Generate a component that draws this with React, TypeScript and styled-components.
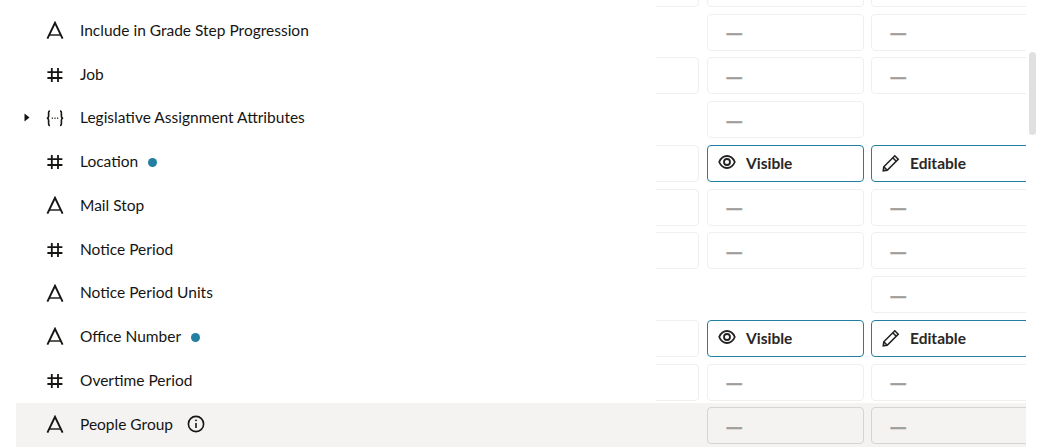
import React from "react";
import styled, { createGlobalStyle } from "styled-components";

const Global = createGlobalStyle`
  html, body { margin: 0; padding: 0; background: #fff; height: 100%; overflow: hidden; }
  body { font-family: "Lato", "Noto Sans", sans-serif; color: #161513; }
`;

const Page = styled.div`
  position: relative;
  width: 1052px;
  height: 448px;
  overflow: hidden;
  display: flex;
`;

const Viewport = styled.div`
  margin-left: 16px;
  width: 1010px;
  height: 448px;
  overflow: hidden;
`;

const List = styled.div`
  margin-top: -34.15px;
  display: flex;
  flex-direction: column;
`;

const Row = styled.div<{ $hover?: boolean }>`
  height: 43.75px;
  flex: none;
  display: flex;
  background: ${(p) => (p.$hover ? "#f4f3f1" : "transparent")};
`;

const NameCell = styled.div`
  width: 640px;
  flex: none;
  box-sizing: border-box;
  display: flex;
  align-items: center;
  height: 41px;
  position: relative;
  padding-left: 30px;
`;

const Caret = styled.svg`
  position: absolute;
  left: 8px;
  top: 16px;
`;

const TypeIcon = styled.svg`
  width: 18px;
  height: 18px;
  flex: none;
  color: #161513;
  margin-right: 16px;
`;

const Label = styled.span`
  font-size: 15.5px;
  line-height: 20px;
  white-space: nowrap;
  margin-top: -0.5px;
`;

const Dot = styled.span`
  width: 9px;
  height: 9px;
  border-radius: 50%;
  background: #237fa1;
  margin-left: 10px;
  margin-top: 2px;
`;

const Info = styled.svg`
  margin-left: 14px;
  margin-top: 1px;
`;

const Values = styled.div`
  display: grid;
  grid-template-columns: 44px 157px 155px;
  column-gap: 7px;
`;

const Slot = styled.div`
  overflow: hidden;
  height: 41px;
  padding-top: 4px;
  box-sizing: border-box;
`;

const Box = styled.div<{ $active?: boolean; $hover?: boolean; $col: "a" | "b" | "c" }>`
  box-sizing: border-box;
  height: 37px;
  width: ${(p) => (p.$col === "c" ? "170px" : "157px")};
  margin-left: ${(p) => (p.$col === "a" ? "-114px" : "0")};
  border-radius: 4px;
  border: 1px solid ${(p) => (p.$active ? "#237fa1" : p.$hover ? "#d6d3d0" : "#f0efee")};
  background: ${(p) => (p.$hover ? "#f4f3f1" : "#fff")};
  display: flex;
  align-items: center;
  padding-left: 11px;
`;

const Dash = styled.span`
  font-family: "Noto Sans", sans-serif;
  font-size: 16.5px;
  font-weight: 700;
  line-height: 20px;
  color: #a09e9c;
  padding-left: 7px;
  -webkit-text-stroke: 0.4px #a09e9c;
`;

const StateIcon = styled.svg`
  width: 18px;
  height: 18px;
  flex: none;
  margin-left: -1px;
  margin-right: 10px;
  color: #222;
`;

const StateText = styled.span`
  font-size: 15.5px;
  line-height: 20px;
  font-weight: 700;
  color: #2a2725;
`;

const Scrollbar = styled.div`
  position: absolute;
  left: 1029px;
  top: 52px;
  width: 7px;
  height: 83px;
  border-radius: 4px;
  background: #e0e0df;
`;

const AIcon = () => (
  <TypeIcon viewBox="0 0 18 18" fill="none" stroke="currentColor" strokeWidth="1.9">
    <path d="M1.4 17.6 L9 1.8 L16.6 17.6" />
    <path d="M3.5 14 H14.5" strokeWidth="1.4" />
  </TypeIcon>
);

const HashIcon = () => (
  <TypeIcon viewBox="0 0 18 18" fill="none" stroke="currentColor" strokeWidth="1.8">
    <path d="M5.8 3 V17 M12 3 V17 M1.4 7.2 H16.4 M1.4 13 H16.4" />
  </TypeIcon>
);

const ObjectIcon = () => (
  <TypeIcon viewBox="0 0 18 18" fill="none" stroke="currentColor" strokeWidth="1.6">
    <path d="M4 2 C2.5 2 2.6 3.5 2.6 5 V7.5 C2.6 8.5 2 9 1 9.2 C2 9.4 2.6 10 2.6 11 V13.5 C2.6 15 2.5 16.5 4 16.5" />
    <path d="M14 2 C15.5 2 15.4 3.5 15.4 5 V7.5 C15.4 8.5 16 9 17 9.2 C16 9.4 15.4 10 15.4 11 V13.5 C15.4 15 15.5 16.5 14 16.5" />
    <path d="M5.8 9.2 H6.8 M8.5 9.2 H9.5 M11.2 9.2 H12.2" />
  </TypeIcon>
);

const EyeIcon = () => (
  <StateIcon viewBox="0 0 18 18" fill="none" stroke="currentColor" strokeWidth="1.8">
    <path d="M1.2 8 C3 3.8 5.8 2 9 2 C12.2 2 15 3.8 16.8 8 C15 12.2 12.2 14 9 14 C5.8 14 3 12.2 1.2 8 Z" />
    <circle cx="9" cy="8" r="3" />
  </StateIcon>
);

const PencilIcon = () => (
  <StateIcon viewBox="0 0 18 18" fill="none" stroke="currentColor" strokeWidth="1.6">
    <path d="M1.3 16.7 L1.8 12.8 L12.8 1.8 L16.2 5.2 L5.2 16.2 Z" />
    <path d="M1.8 12.8 L5.2 16.2 M10.8 3.8 L14.2 7.2" />
  </StateIcon>
);

type Kind = "text" | "number" | "object" | "none";
type Value = "dash" | "blank" | "edit" | "visible" | "empty";
interface RowData {
  name?: string;
  kind: Kind;
  marker?: "dot" | "info";
  caret?: boolean;
  a: Value;
  b: Value;
  c: Value;
  hover?: boolean;
}

const rows: RowData[] = [
  { kind: "none", a: "blank", b: "blank", c: "blank" },
  { name: "Include in Grade Step Progression", kind: "text", a: "empty", b: "dash", c: "dash" },
  { name: "Job", kind: "number", a: "blank", b: "dash", c: "dash" },
  { name: "Legislative Assignment Attributes", kind: "object", caret: true, a: "empty", b: "dash", c: "empty" },
  { name: "Location", kind: "number", marker: "dot", a: "blank", b: "visible", c: "edit" },
  { name: "Mail Stop", kind: "text", a: "blank", b: "dash", c: "dash" },
  { name: "Notice Period", kind: "number", a: "blank", b: "dash", c: "dash" },
  { name: "Notice Period Units", kind: "text", a: "empty", b: "empty", c: "dash" },
  { name: "Office Number", kind: "text", marker: "dot", a: "blank", b: "visible", c: "edit" },
  { name: "Overtime Period", kind: "number", a: "blank", b: "dash", c: "dash" },
  { name: "People Group", kind: "text", marker: "info", a: "empty", b: "dash", c: "dash", hover: true },
];

const ValueSlot = ({ col, value, hover }: { col: "a" | "b" | "c"; value: Value; hover?: boolean }) => {
  if (value === "empty") return <Slot />;
  const active = value === "visible" || value === "edit";
  return (
    <Slot>
      <Box $col={col} $active={active} $hover={hover}>
        {value === "dash" && <Dash>—</Dash>}
        {value === "visible" && (
          <>
            <EyeIcon />
            <StateText>Visible</StateText>
          </>
        )}
        {value === "edit" && (
          <>
            <PencilIcon />
            <StateText>Editable</StateText>
          </>
        )}
      </Box>
    </Slot>
  );
};

export default function App() {
  return (
    <Page>
      <Global />
      <Viewport>
        <List>
          {rows.map((r, i) => (
            <Row key={i} $hover={r.hover}>
              <NameCell>
                {r.caret && (
                  <Caret width="6" height="9" viewBox="0 0 6 9">
                    <path d="M0.5 0.5 L5.5 4.5 L0.5 8.5 Z" fill="#161513" />
                  </Caret>
                )}
                {r.kind === "text" && <AIcon />}
                {r.kind === "number" && <HashIcon />}
                {r.kind === "object" && <ObjectIcon />}
                {r.name && <Label>{r.name}</Label>}
                {r.marker === "dot" && <Dot />}
                {r.marker === "info" && (
                  <Info width="18" height="18" viewBox="0 0 18 18" fill="none" stroke="#161513" strokeWidth="1.6">
                    <circle cx="9" cy="9" r="7.6" />
                    <path d="M9 8 V13" />
                    <circle cx="9" cy="5.4" r="0.6" fill="#161513" strokeWidth="0.8" />
                  </Info>
                )}
              </NameCell>
              <Values>
                <ValueSlot col="a" value={r.a} hover={r.hover} />
                <ValueSlot col="b" value={r.b} hover={r.hover} />
                <ValueSlot col="c" value={r.c} hover={r.hover} />
              </Values>
            </Row>
          ))}
        </List>
      </Viewport>
      <Scrollbar />
    </Page>
  );
}
